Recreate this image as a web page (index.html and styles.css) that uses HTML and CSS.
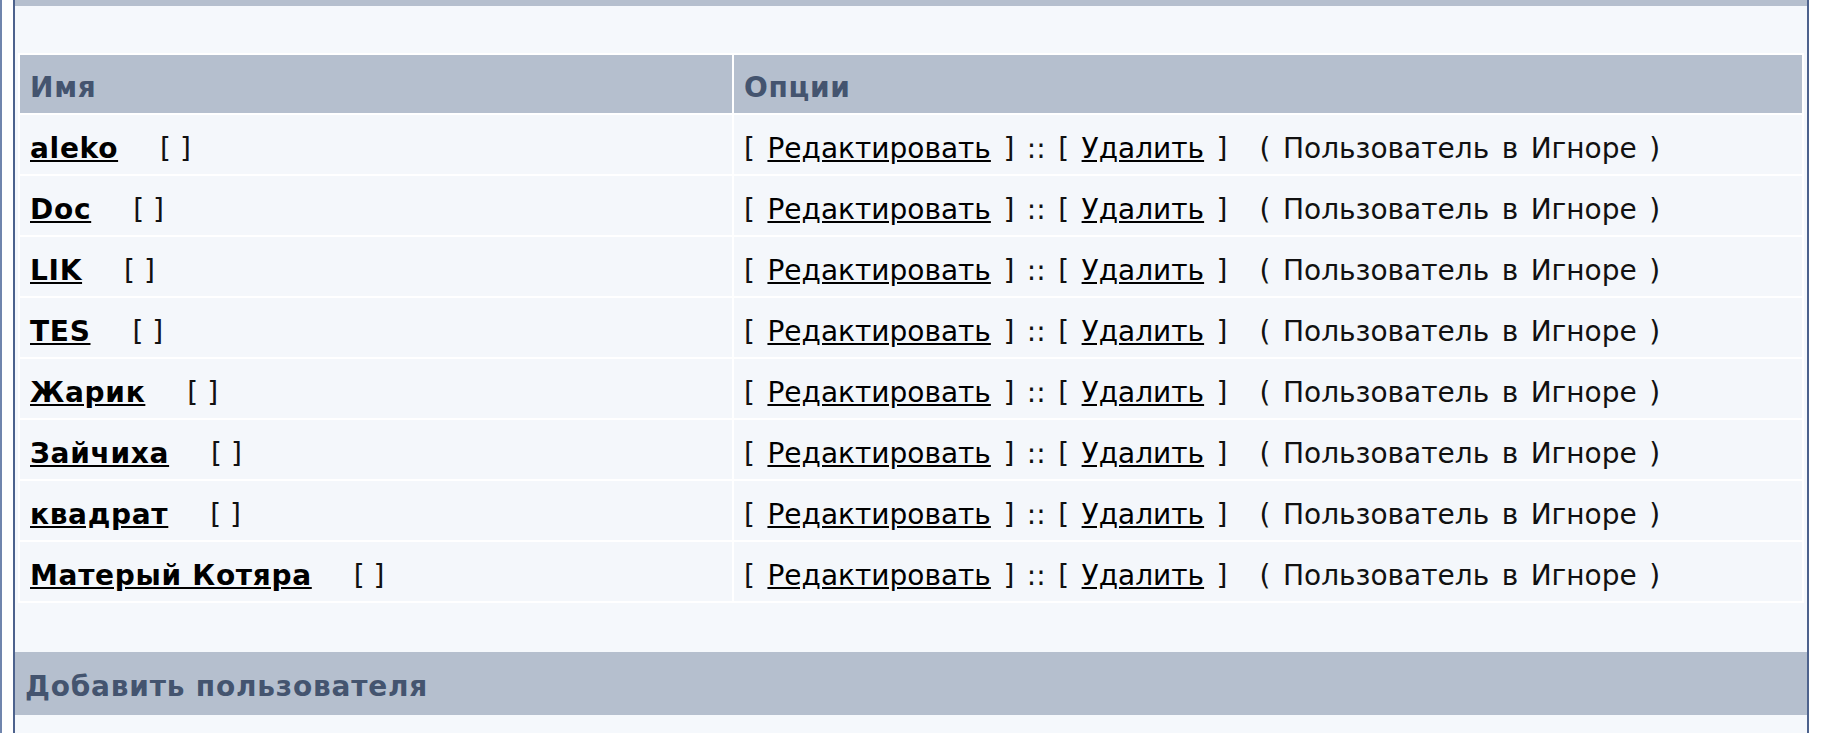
FILE: index.html
```html
<!DOCTYPE html>
<html lang="ru">
<head>
  <meta charset="UTF-8">
  <title>Список друзей и врагов</title>
  <link rel="stylesheet" href="styles.css">
</head>
<body>
  <div class="page">
    <div class="panel">
      <div class="panel-top"></div>

      <!-- Список пользователей -->
      <table class="list">
        <tr>
          <th class="col-name">Имя</th>
          <th>Опции</th>
        </tr>
        <tr>
          <td><a href="#" class="user">aleko</a><span class="mark">[ ]</span></td>
          <td class="opts">[ <a href="#">Редактировать</a> ] :: [ <a href="#">Удалить</a> ]<span class="note">( Пользователь в Игноре )</span></td>
        </tr>
        <tr>
          <td><a href="#" class="user">Doc</a><span class="mark">[ ]</span></td>
          <td class="opts">[ <a href="#">Редактировать</a> ] :: [ <a href="#">Удалить</a> ]<span class="note">( Пользователь в Игноре )</span></td>
        </tr>
        <tr>
          <td><a href="#" class="user">LIK</a><span class="mark">[ ]</span></td>
          <td class="opts">[ <a href="#">Редактировать</a> ] :: [ <a href="#">Удалить</a> ]<span class="note">( Пользователь в Игноре )</span></td>
        </tr>
        <tr>
          <td><a href="#" class="user">TES</a><span class="mark">[ ]</span></td>
          <td class="opts">[ <a href="#">Редактировать</a> ] :: [ <a href="#">Удалить</a> ]<span class="note">( Пользователь в Игноре )</span></td>
        </tr>
        <tr>
          <td><a href="#" class="user">Жарик</a><span class="mark">[ ]</span></td>
          <td class="opts">[ <a href="#">Редактировать</a> ] :: [ <a href="#">Удалить</a> ]<span class="note">( Пользователь в Игноре )</span></td>
        </tr>
        <tr>
          <td><a href="#" class="user">Зайчиха</a><span class="mark">[ ]</span></td>
          <td class="opts">[ <a href="#">Редактировать</a> ] :: [ <a href="#">Удалить</a> ]<span class="note">( Пользователь в Игноре )</span></td>
        </tr>
        <tr>
          <td><a href="#" class="user">квадрат</a><span class="mark">[ ]</span></td>
          <td class="opts">[ <a href="#">Редактировать</a> ] :: [ <a href="#">Удалить</a> ]<span class="note">( Пользователь в Игноре )</span></td>
        </tr>
        <tr>
          <td><a href="#" class="user">Матерый Котяра</a><span class="mark">[ ]</span></td>
          <td class="opts">[ <a href="#">Редактировать</a> ] :: [ <a href="#">Удалить</a> ]<span class="note">( Пользователь в Игноре )</span></td>
        </tr>
      </table>

      <!-- Добавление -->
      <div class="bar">Добавить пользователя</div>
      <div class="panel-rest"></div>
    </div>
  </div>
</body>
</html>
```

FILE: styles.css
```css
body { margin: 0; background: #fff; font-family: "DejaVu Sans", Verdana, sans-serif; font-size: 28px; color: #111; }
a { color: #000; }
.page { border-left: 2px solid #7085ad; padding-left: 11px; }
.panel { box-sizing: border-box; width: 1796px; background: #f5f8fc; border-left: 2px solid #4d628d; border-right: 2px solid #4d628d; }
.panel-top { height: 6px; background: #b5bfce; margin-bottom: 47px; }
.list { width: calc(100% - 6px); margin: 0 3px; border-spacing: 2px; table-layout: fixed; background: #fff; }
.list th { box-sizing: border-box; text-align: left; background: #b5bfce; color: #44546f; font-weight: bold; letter-spacing: 0.7px; padding: 14px 10px 6px; line-height: 38px; }
.list .col-name { width: 40%; }
.list td { background: #f4f7fb; padding: 14px 10px 6px; line-height: 39px; white-space: nowrap; }
.opts { word-spacing: 3.6px; }
.user { font-weight: bold; letter-spacing: 0.7px; }
.mark { margin-left: 42px; }
.note { margin-left: 32px; }
.bar { margin-top: 49px; height: 63px; box-sizing: border-box; padding: 15px 10px 0; line-height: 40px; background: #b5bfce; color: #44546f; font-weight: bold; letter-spacing: 0.8px; }
.panel-rest { height: 40px; }
```
